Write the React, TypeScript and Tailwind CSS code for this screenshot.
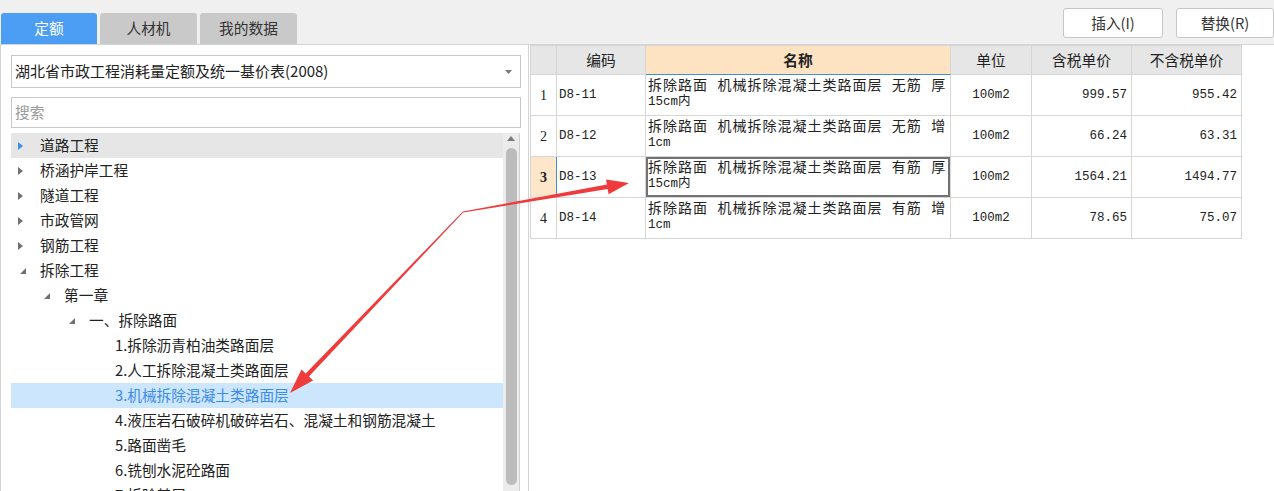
import React from 'react';

type TreeNode = { label: string; level: number; state: 'closed' | 'open' | 'leaf'; hover?: boolean; selected?: boolean; blueIcon?: boolean };

const tree: TreeNode[] = [
  { label: '道路工程', level: 0, state: 'closed', hover: true, blueIcon: true },
  { label: '桥涵护岸工程', level: 0, state: 'closed' },
  { label: '隧道工程', level: 0, state: 'closed' },
  { label: '市政管网', level: 0, state: 'closed' },
  { label: '钢筋工程', level: 0, state: 'closed' },
  { label: '拆除工程', level: 0, state: 'open' },
  { label: '第一章', level: 1, state: 'open' },
  { label: '一、拆除路面', level: 2, state: 'open' },
  { label: '1.拆除沥青柏油类路面层', level: 3, state: 'leaf' },
  { label: '2.人工拆除混凝土类路面层', level: 3, state: 'leaf' },
  { label: '3.机械拆除混凝土类路面层', level: 3, state: 'leaf', selected: true },
  { label: '4.液压岩石破碎机破碎岩石、混凝土和钢筋混凝土', level: 3, state: 'leaf' },
  { label: '5.路面凿毛', level: 3, state: 'leaf' },
  { label: '6.铣刨水泥砼路面', level: 3, state: 'leaf' },
  { label: '7.拆除基层', level: 3, state: 'leaf' },
];

const indent = ['pl-0', 'pl-[24px]', 'pl-[49px]', 'pl-[75px]'];

const rows = [
  { n: '1', code: 'D8-11', name1: '拆除路面 机械拆除混凝土类路面层 无筋 厚', name2: '15cm内', unit: '100m2', tax: '999.57', notax: '955.42' },
  { n: '2', code: 'D8-12', name1: '拆除路面 机械拆除混凝土类路面层 无筋 增', name2: '1cm', unit: '100m2', tax: '66.24', notax: '63.31' },
  { n: '3', code: 'D8-13', name1: '拆除路面 机械拆除混凝土类路面层 有筋 厚', name2: '15cm内', unit: '100m2', tax: '1564.21', notax: '1494.77' },
  { n: '4', code: 'D8-14', name1: '拆除路面 机械拆除混凝土类路面层 有筋 增', name2: '1cm', unit: '100m2', tax: '78.65', notax: '75.07' },
];

const TreeIcon = ({ state, blue }: { state: TreeNode['state']; blue?: boolean }) => {
  if (state === 'leaf') return null;
  if (state === 'closed')
    return (
      <svg width="5" height="8" viewBox="0 0 5 8" className="ml-[7px]">
        <path d="M0 0 L5 4 L0 8 Z" fill={blue ? '#3d8fe8' : '#707070'} />
      </svg>
    );
  return (
    <svg width="6" height="6" viewBox="0 0 6 6" className="ml-[9px]">
      <path d="M6 0 L6 6 L0 6 Z" fill="#707070" />
    </svg>
  );
};

// tapered arrow like a screenshot tool annotation
const arrowPoints = (sx: number, sy: number, tx: number, ty: number, headLen: number, headHalf: number) => {
  const dx = tx - sx;
  const dy = ty - sy;
  const len = Math.hypot(dx, dy);
  const ux = dx / len;
  const uy = dy / len;
  const px = -uy;
  const py = ux;
  const bx = tx - ux * headLen;
  const by = ty - uy * headLen;
  const pts = [
    [sx + px * 0.5, sy + py * 0.5],
    [bx + px * 2.2, by + py * 2.2],
    [bx + px * headHalf, by + py * headHalf],
    [tx, ty],
    [bx - px * headHalf, by - py * headHalf],
    [bx - px * 2.2, by - py * 2.2],
    [sx - px * 0.5, sy - py * 0.5],
  ];
  return pts.map((p) => p.map((v) => v.toFixed(1)).join(',')).join(' ');
};

export default function App() {
  return (
    <div className="w-[1274px] h-[491px] relative overflow-hidden bg-[#f0f0f0] text-[14.7px] text-[#222] font-['Noto_Sans_CJK_SC',sans-serif]">
      {/* Top bar */}
      <div className="h-[44px] flex justify-between">
        <div className="flex items-end gap-[3px] pl-[1px]">
          <div className="w-[96px] h-[31px] rounded-t-[3px] bg-[#4b9ef3] text-white flex items-center justify-center">定额</div>
          <div className="w-[97px] h-[31px] rounded-t-[3px] bg-[#c9c9c9] text-[#333] flex items-center justify-center">人材机</div>
          <div className="w-[97px] h-[31px] rounded-t-[3px] bg-[#c9c9c9] text-[#333] flex items-center justify-center">我的数据</div>
        </div>
        <div className="flex gap-[13px] pt-[8px]">
          <div className="w-[100px] h-[30px] bg-white border border-[#c6c6c6] rounded-[3px] flex items-center justify-center text-[#333]">插入(I)</div>
          <div className="w-[98px] h-[30px] bg-white border border-[#c6c6c6] rounded-[3px] flex items-center justify-center text-[#333]">替换(R)</div>
        </div>
      </div>

      {/* Body */}
      <div className="flex h-[447px]">
        {/* Left panel */}
        <div className="w-[529px] bg-white border-t border-l border-r border-[#d4d4d4] flex flex-col pl-[10px] pr-[7px]">
          <div className="mt-[10px] h-[33px] border border-[#c8c8c8] flex items-center justify-between pl-[3px] pr-[8px] text-[15px]">
            <span>湖北省市政工程消耗量定额及统一基价表(2008)</span>
            <svg width="7" height="4" viewBox="0 0 7 4">
              <path d="M0 0 L7 0 L3.5 4 Z" fill="#7a7a7a" />
            </svg>
          </div>
          <div className="mt-[9px] h-[31px] border border-[#c8c8c8] flex items-center pl-[3px] text-[#9a9a9a]">搜索</div>
          <div className="mt-[5px] flex-1 flex overflow-hidden">
            <div className="w-[492px] flex flex-col">
              {tree.map((t) => (
                <div
                  key={t.label}
                  className={`h-[25px] shrink-0 flex items-center whitespace-nowrap ${indent[t.level]} ${
                    t.hover ? 'bg-[#e6e6e6]' : t.selected ? 'bg-[#cce6fd]' : ''
                  }`}
                >
                  <div className="w-[29px] flex items-center">
                    <TreeIcon state={t.state} blue={t.blueIcon} />
                  </div>
                  <span className={t.selected ? 'text-[#3d8ce6]' : 'text-[#222]'}>{t.label}</span>
                </div>
              ))}
            </div>
            <div className="w-[17px] bg-[#ececec] border-r border-[#d0d0d0] flex flex-col items-center">
              <svg width="8" height="5" viewBox="0 0 8 5" className="mt-[3px]">
                <path d="M0 5 L8 5 L4 0 Z" fill="#7a7a7a" />
              </svg>
              <div className="mt-[7px] w-[11px] h-[337px] rounded-full bg-[#bcbcbc]" />
            </div>
          </div>
        </div>

        {/* Right panel */}
        <div className="flex-1 bg-white border-t border-[#d4d4d4] pl-[1px]">
          <div className="w-[712px] border-l border-t border-[#d6d6d6] grid grid-cols-[26px_89px_305px_81px_100px_110px]">
            <div className="h-[29px] bg-[#e6e6e6] border-r border-b border-[#d6d6d6]" />
            <div className="h-[29px] bg-[#e6e6e6] border-r border-b border-[#d6d6d6] flex items-center justify-center">编码</div>
            <div className="h-[29px] bg-[#fde3c2] border-r border-b border-r-[#d6d6d6] border-b-[#3d8ee8] flex items-center justify-center font-bold">名称</div>
            <div className="h-[29px] bg-[#e6e6e6] border-r border-b border-[#d6d6d6] flex items-center justify-center">单位</div>
            <div className="h-[29px] bg-[#e6e6e6] border-r border-b border-[#d6d6d6] flex items-center justify-center">含税单价</div>
            <div className="h-[29px] bg-[#e6e6e6] border-r border-b border-[#d6d6d6] flex items-center justify-center">不含税单价</div>

            {rows.map((r) => {
              const sel = r.n === '3';
              return (
                <React.Fragment key={r.n}>
                  <div
                    className={`h-[41px] border-r border-b border-[#d6d6d6] flex items-center justify-center font-['Liberation_Serif',serif] text-[14px] ${
                      sel ? 'bg-[#fde6c9] font-bold border-r-[#3d8ee8]' : ''
                    }`}
                  >
                    {r.n}
                  </div>
                  <div className="h-[41px] border-r border-b border-[#d6d6d6] flex items-center pl-[2px] font-['Liberation_Mono',monospace] text-[12.5px]">
                    {r.code}
                  </div>
                  <div
                    className={`h-[41px] border-r border-b border-[#d6d6d6] pt-[3px] pl-[2px] whitespace-nowrap text-[14px] tracking-[1px] leading-[16px] font-['Liberation_Mono','Noto_Sans_CJK_SC',monospace] ${
                      sel ? 'shadow-[inset_0_0_0_2px_#727272]' : ''
                    }`}
                  >
                    <div>{r.name1}</div>
                    <div className="text-[12.5px] tracking-[0px]">{r.name2}</div>
                  </div>
                  <div className="h-[41px] border-r border-b border-[#d6d6d6] flex items-center justify-center font-['Liberation_Mono',monospace] text-[12.5px]">
                    {r.unit}
                  </div>
                  <div className="h-[41px] border-r border-b border-[#d6d6d6] flex items-center justify-end pr-[4px] font-['Liberation_Mono',monospace] text-[12.5px]">
                    {r.tax}
                  </div>
                  <div className="h-[41px] border-r border-b border-[#d6d6d6] flex items-center justify-end pr-[4px] font-['Liberation_Mono',monospace] text-[12.5px]">
                    {r.notax}
                  </div>
                </React.Fragment>
              );
            })}
          </div>
        </div>
      </div>

      {/* Annotation arrows */}
      <svg className="absolute inset-0 pointer-events-none" width="1274" height="491" viewBox="0 0 1274 491">
        <polygon points={arrowPoints(463, 212, 290, 393, 25, 8)} fill="#ef3b3b" />
        <polygon points={arrowPoints(463, 212, 629, 183, 22, 7.5)} fill="#ef3b3b" />
      </svg>
    </div>
  );
}
